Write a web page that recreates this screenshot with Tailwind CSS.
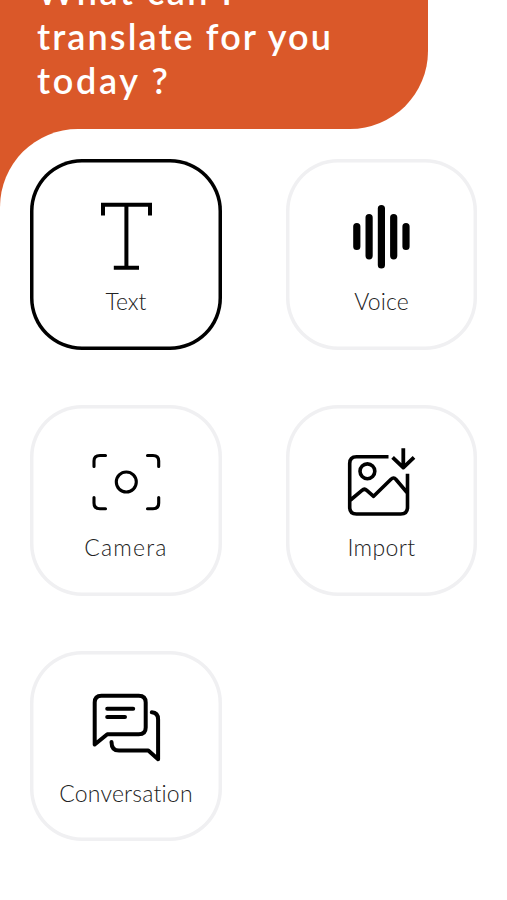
<!DOCTYPE html>
<html lang="en">
<head>
<meta charset="utf-8">
<title>Translate</title>
<script src="https://cdn.jsdelivr.net/npm/@tailwindcss/browser@4"></script>
</head>
<body class="bg-white h-[900px] overflow-hidden font-['Lato',sans-serif] [font-variant-ligatures:none]">
<header class="w-[427.5px] h-[129px] bg-[#da5829] rounded-br-[78px] overflow-hidden flex flex-col justify-end pl-[37px] pb-[27px]">
  <h1 class="text-white text-[36px] leading-[44px] font-semibold whitespace-nowrap">
    <span class="block w-fit tracking-[2.5px] leading-[46px]">What can I</span>
    <span class="block w-fit tracking-[2.1px]">translate for you</span>
    <span class="block w-fit tracking-[2.7px]">today ?</span>
  </h1>
</header>
<div class="bg-[#da5829]">
<main class="h-[771px] bg-white rounded-tl-[78px] pt-[30px] pl-[30px]">
  <div class="grid grid-cols-[192px_191px] gap-x-[64px] gap-y-[55px]">
    <button class="h-[191px] rounded-[52px] shadow-[inset_0_0_0_3.5px_#000] flex flex-col items-center pt-[32px]">
      <svg class="w-24 h-24 shrink-0" viewBox="78 191 96 96" fill="none" stroke="#000" stroke-width="4"><path d="M103 215.5V204.7H150V215.5M126.4 204.7V267.8M113.8 267.8H139"/></svg>
      <span class="text-[23px] leading-7 font-light text-[#222]">Text</span>
    </button>
    <button class="h-[191px] rounded-[52px] shadow-[inset_0_0_0_3.5px_#f0f0f2] flex flex-col items-center pt-[32px]">
      <svg class="w-24 h-24 shrink-0" viewBox="334 191 96 96" fill="none" stroke="#000" stroke-width="7.2" stroke-linecap="round"><path d="M356.8 226.5V246.5M369.1 217.5V255.8M381.4 208.6V265M393.7 217.5V255.8M406 226.5V246.5"/></svg>
      <span class="text-[23px] leading-7 font-light text-[#222] tracking-[0.1px]">Voice</span>
    </button>
    <button class="h-[191px] rounded-[52px] shadow-[inset_0_0_0_3.5px_#f0f0f2] flex flex-col items-center pt-[32px]">
      <svg class="w-24 h-24 shrink-0" viewBox="78 437 96 96" fill="none" stroke="#000" stroke-width="3.1" stroke-linecap="round" stroke-linejoin="round"><path d="M94 466.5V461Q94 455.5 100 455.5H105.5M147.5 455.5H153Q158.7 455.5 158.7 461V466.5M158.7 497.5V503Q158.7 508.7 153 508.7H147.5M105.5 508.7H100Q94 508.7 94 503V497.5"/><circle cx="126.3" cy="482" r="10"/></svg>
      <span class="text-[23px] leading-7 font-light text-[#222] tracking-[1.2px]">Camera</span>
    </button>
    <button class="h-[191px] rounded-[52px] shadow-[inset_0_0_0_3.5px_#f0f0f2] flex flex-col items-center pt-[32px]">
      <svg class="w-24 h-24 shrink-0" viewBox="334 437 96 96" fill="none" stroke="#000" stroke-width="3.6" stroke-linejoin="round"><path d="M388.5 456.7H356.5Q349.7 456.7 349.7 463.5V507.2Q349.7 514 356.5 514H400.7Q407.5 514 407.5 507.2V473.8M350.5 500L362 490.3Q364.4 488.2 366.8 490.3L373.6 496.3L391 479.2Q393.6 476.8 396 479.5L407 492.5"/><circle cx="367.4" cy="471.3" r="7.4"/><path stroke-width="3.8" d="M403.3 448.2V468.5M392.6 457.4L403.3 467.6L414 457.4"/></svg>
      <span class="text-[23px] leading-7 font-light text-[#222] tracking-[0.4px]">Import</span>
    </button>
    <button class="h-[190px] rounded-[52px] shadow-[inset_0_0_0_3.5px_#f0f0f2] flex flex-col items-center pt-[32px]">
      <svg class="w-24 h-24 shrink-0" viewBox="78 683 96 96" fill="none" stroke="#000" stroke-width="4" stroke-linecap="round" stroke-linejoin="round"><path d="M94.7 744.5V702.5Q94.7 695.7 101.5 695.7H138.7Q145.7 695.7 145.7 702.5V727.5Q145.7 734.3 138.7 734.3H107.3ZM107.2 708.7H133.2M107.2 717H125M151.8 712.3Q158.1 712.6 158.1 719.5V759.3L148.3 750.6H119Q111.5 750.6 111.5 742"/></svg>
      <span class="text-[23px] leading-7 font-light text-[#222] tracking-[0.2px]">Conversation</span>
    </button>
  </div>
</main>
</div>
</body>
</html>
